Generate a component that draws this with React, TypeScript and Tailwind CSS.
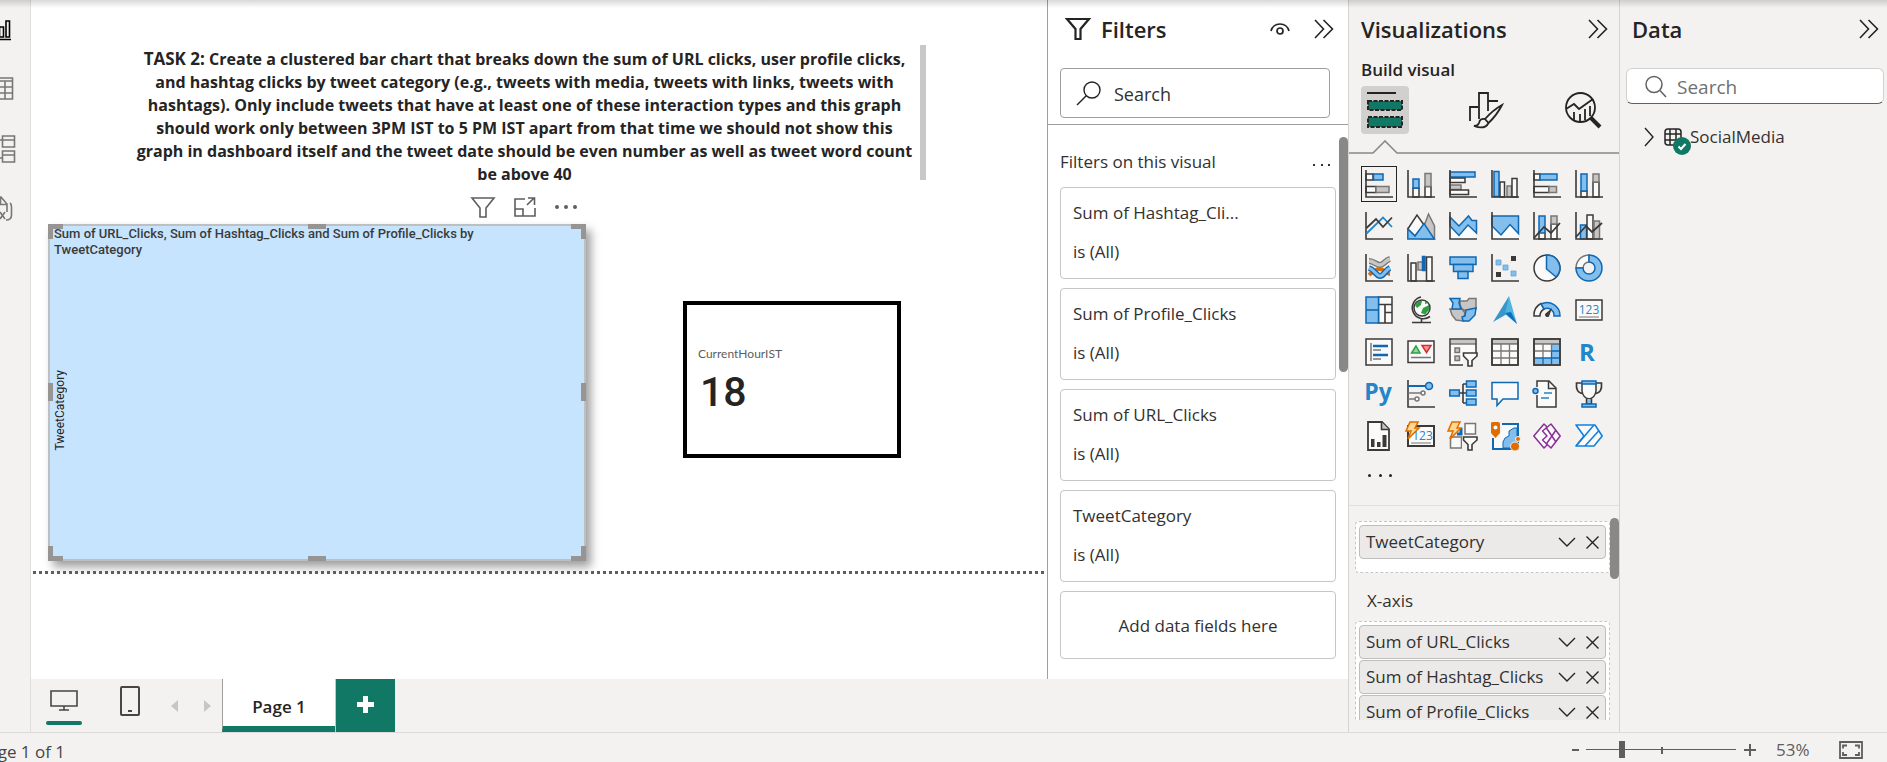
import React from "react";

const K = "#3b3a39";
const B = "#0f68b4";
const LB = "#83beec";
const G = "#797775";
const LG = "#c8c6c4";
const W = "#fafafa";

type BoxProps = { x: number; y: number; w: number; h: number; f?: string; s?: string; sw?: number };
const Box = ({ x, y, w, h, f = W, s = K, sw = 1.5 }: BoxProps) => (
  <rect x={x} y={y} width={w} height={h} fill={f} stroke={s} strokeWidth={sw} />
);
const Axis = () => <path d="M1 0V27H28" fill="none" stroke={K} strokeWidth={1.6} />;
const Line = ({ d, s = K, sw = 1.5, f = "none" }: { d: string; s?: string; sw?: number; f?: string }) => (
  <path d={d} fill={f} stroke={s} strokeWidth={sw} />
);
const Bolt = () => <path d="M3 0H11L8 6H12L1 17L4 9H-1Z" fill="#fcd98c" stroke="#e06c00" strokeWidth={1.5} />;
const SmallFunnel = () => <path d="M14.500 15H28V18L23 22.500V28H19V22.500L14.500 18Z" fill={W} stroke={K} strokeWidth={1.6} />;

const visuals: [string, React.ReactNode][] = [
  ["Stacked bar chart", <><Box x={1} y={4} w={7} h={6} /><Box x={8.5} y={4} w={9.500} h={6} f={LB} s={B} /><Box x={1} y={16.500} w={10} h={6} /><Box x={11} y={16.500} w={13} h={6} f={LG} s={G} /><Axis /></>],
  ["Stacked column chart", <><Box x={6} y={18} w={6} h={9} /><Box x={6} y={9} w={6} h={9} f={LB} s={B} /><Box x={18} y={16.500} w={6} h={10.500} /><Box x={18} y={3.500} w={6} h={13} f={LG} s={G} /><Axis /></>],
  ["Clustered bar chart", <><Box x={1} y={2} w={25} h={5} f={LB} s={B} /><Box x={1} y={8} w={15} h={4.500} /><Box x={1} y={15} w={11} h={4.500} f={LG} s={G} /><Box x={1} y={20} w={18.500} h={4.500} /><Axis /></>],
  ["Clustered column chart", <><Box x={3} y={1.500} w={5} h={25} f={LB} s={B} /><Box x={9} y={12} w={4.500} h={15} /><Box x={16} y={16} w={4.500} h={11} f={LG} s={G} /><Box x={21} y={8.500} w={5} h={18.500} /><Axis /></>],
  ["100% stacked bar chart", <><Box x={1} y={4} w={6} h={6} /><Box x={7} y={4} w={17} h={6} f={LB} s={B} /><Box x={1} y={16.500} w={15} h={6} /><Box x={16} y={16.500} w={7.500} h={6} f={LG} s={G} /><Axis /></>],
  ["100% stacked column chart", <><Box x={6} y={21} w={6} h={6} /><Box x={6} y={4} w={6} h={17} f={LB} s={B} /><Box x={18} y={12} w={6} h={15} /><Box x={18} y={4} w={6} h={8} f={LG} s={G} /><Axis /></>],

  ["Line chart", <><Axis /><Line d="M1.500 21.500L18 5.500L27 15" s="#2386c8" sw={1.8} /><Line d="M1.500 16L11 7L18 15L27 5.500" sw={1.8} /></>],
  ["Area chart", <><Line d="M14 22L21.500 2L27.500 14V27H14Z" f={LG} s={G} /><Line d="M.8 17L10 3L17 13L8 24Z" f={W} /><Line d="M.8 17L8 24L17 11.500L27.300 27H.8Z" f={LB} s={B} /></>],
  ["Stacked area chart", <><path d="M1 14L10 24L19 13L27 21V27H1Z" fill={W} /><Line d="M1 5L10 14L19.500 4L23 8.500H27.500V21L19 13L10 23.500L1 14Z" f={LB} s={B} /><Axis /></>],
  ["100% stacked area chart", <><path d="M1 14L10 24L19 13L27 21V27H1Z" fill={W} /><Line d="M1 4H27.500V21.500L19 12.500L10 23L1 14Z" f={LB} s={B} /><Axis /></>],
  ["Line and stacked column chart", <><Box x={6} y={20} w={6} h={7} /><Box x={6} y={4} w={6} h={17} f={LB} s={B} /><Box x={18} y={12} w={6} h={15} /><Box x={18} y={4} w={6} h={8} f={LG} s={G} /><Axis /><Line d="M1 26L11 15L18 21L27 11" sw={1.8} /></>],
  ["Line and clustered column chart", <><Box x={5.500} y={13} w={6} h={14} f={LB} s={B} /><Box x={12} y={3} w={6} h={24} /><Box x={19} y={9} w={5.500} h={18} f={LG} s={G} /><Axis /><Line d="M1 25L11 14L17 20L27 11" sw={1.8} /></>],

  ["Ribbon chart", <><path d="M4 21C9 17 11 15 15 15S21 20 25 20" fill="none" stroke="#e06c00" strokeWidth={4} /><path d="M4 14C10 16 11 22 15 22S20 16 25 14" fill="none" stroke={B} strokeWidth={6} /><path d="M4 14C10 16 11 22 15 22S20 16 25 14" fill="none" stroke={LB} strokeWidth={3} /><path d="M4 7C9 7 11 11 15 11S20 6 25 5" fill="none" stroke={G} strokeWidth={6} /><path d="M4 7C9 7 11 11 15 11S20 6 25 5" fill="none" stroke={LG} strokeWidth={3.500} /><Axis /></>],
  ["Waterfall chart", <><Box x={4} y={9} w={5} h={18} /><Box x={11} y={8} w={5} h={8} f={LG} s={G} /><Box x={15.500} y={2.500} w={2.500} h={14} f={B} s={B} /><Box x={19.500} y={3} w={5.500} h={24} /><Axis /></>],
  ["Funnel", <><Box x={1} y={3} w={26} h={7.500} f={LB} s={B} /><Box x={4.500} y={10.500} w={19.500} h={7} f={LB} s={B} /><Box x={9} y={17.500} w={10} h={7} f={LB} s={B} /></>],
  ["Scatter chart", <><Axis /><path d="M20 2h5v5h-5zM5 18h5v5H5z" fill={K} /><path d="M5 6h5v5H5zM12 11h5v5h-5zM20 17h5v5h-5z" fill={LB} stroke="#5fa5dd" strokeWidth={0.8} /></>],
  ["Pie chart", <><circle cx={14} cy={14} r={13} fill={W} stroke={K} strokeWidth={1.5} /><Line d="M13.500 1A13 13 0 0 1 23.200 23L13.500 15Z" f={LB} s={B} /></>],
  ["Donut chart", <><Line d="M14 1A13 13 0 0 0 1 14H8A6 6 0 0 1 14 8Z" f={W} s={G} /><Line d="M14 1A13 13 0 1 1 1 14H8A6 6 0 1 0 14 8Z" f={LB} s={B} /></>],

  ["Treemap", <><Box x={13.500} y={1} w={13.500} h={26} /><path d="M13.500 8.500H27M20 8.500V27M20 16.500H27" stroke={K} strokeWidth={1.6} /><Box x={1} y={1} w={12.500} h={26} f={LB} s={B} /><path d="M1 14H13.500" stroke={B} strokeWidth={1.600} /></>],
  ["Map", <><circle cx={15} cy={12} r={8} fill={W} stroke={K} strokeWidth={1.500} /><path d="M8 9Q11 4 15 5L14 9L10 12ZM16 12L22 9L22 14L18 18.500L14 17ZM18 5L21 7L18 8Z" fill="#2f9e44" /><path d="M14 1A11 11 0 1 0 23 20.500M14.500 23V26.500M5 26.500H24" fill="none" stroke={K} strokeWidth={1.600} /></>],
  ["Filled map", <><Line d="M11 5L18 5L20 2.500H27V13L17 15L13 13L11 9Z" f={LG} s={G} /><Line d="M1 13H13L16 17L14 25L7 24L3 19Z" f={LG} s={G} /><Line d="M1 2.500H11L10 7L12 13H3L4 7Z" f={LB} s={B} /><Line d="M17 14L27 12L26 19L20 25H14L13 21L16 20Z" f={LB} s={B} /></>],
  ["Azure map", <><path d="M18 0L2 26L16 18Z" fill="#3a95c8" /><path d="M18 0L26 28L14 18Z" fill="#50b4de" /><path d="M14 17L20 16L26 28Z" fill="#0a6fc2" /></>],
  ["Gauge", <><Line d="M1 20A13 13 0 0 1 8 7.500L11 13A8 8 0 0 0 7 20Z" f={W} /><Line d="M8 8A13 13 0 0 1 27 20H21A7 7 0 0 0 11 13Z" f={LB} s={B} /><path d="M12 18L19 12L16 20.500A2.500 2.500 0 0 1 12 18Z" fill={K} /></>],
  ["Card", <><Box x={1} y={4} w={26} h={20} /><text x={14} y={18} textAnchor="middle" fontSize={12} fill="#2386c8">123</text><path d="M4 21H24" stroke={G} /></>],

  ["Multi-row card", <><Box x={1} y={1} w={26} h={26} /><path d="M6 5V23" stroke={G} strokeWidth={1.500} /><path d="M8 8H23M8 17H23" stroke={B} strokeWidth={2.500} /><path d="M8 12H16M8 21H16" stroke={G} strokeWidth={1.500} /></>],
  ["KPI", <><Box x={1} y={3} w={26} h={21.500} /><Line d="M9 8L4.500 15H13Z" f="#92d3a0" s="#2f9e44" /><Line d="M15 7.500H24L19.500 14.500Z" f="#f59a9e" s="#d92c2c" /><path d="M4 19.500H24" stroke={G} strokeWidth={1.500} /></>],
  ["Slicer", <><Box x={1} y={1} w={26} h={26} /><rect x={2} y={2} width={24} height={3.500} fill={LG} /><path d="M1 6H27" stroke={K} /><Box x={6} y={10} w={4.500} h={4.500} f={LG} s={G} /><Box x={6} y={18} w={4.500} h={4.500} f={LG} s={G} /><rect x={14} y={19} width={15} height={9} fill="#f3f2f1" /><SmallFunnel /></>],
  ["Table", <><Box x={1} y={1} w={26} h={26} /><rect x={2} y={2} width={24} height={4} fill={LG} /><path d="M1 6H27" stroke={K} /><path d="M10 6V26M18.500 6V26M2 13H26M2 20H26" stroke={G} strokeWidth={1.300} /><Box x={1} y={1} w={26} h={26} f="none" /></>],
  ["Matrix", <><Box x={1} y={1} w={26} h={26} /><rect x={2} y={2} width={24} height={4} fill={LG} /><path d="M18.500 6H26V26H2V20H18.500Z" fill={LB} /><path d="M1 6H27" stroke={K} /><path d="M10 6V20M18.500 6V13M2 13H18.500" stroke={G} strokeWidth={1.300} /><path d="M10 20V26M18.500 13V26M18.500 13H26M2 20H26" stroke={B} strokeWidth={1.300} /><Box x={1} y={1} w={26} h={26} f="none" /></>],
  ["R script visual", <text x={12} y={23} textAnchor="middle" fontSize={24} fontWeight={700} fill="#2386c8">R</text>],

  ["Python visual", <text x={13} y={20} textAnchor="middle" fontSize={23} fontWeight={700} fill="#2386c8">Py</text>],
  ["Key influencers", <><Axis /><path d="M1 6H19" stroke={B} strokeWidth={2} /><circle cx={22} cy={6} r={3.500} fill={LB} stroke={B} strokeWidth={1.600} /><path d="M1 13H14M1 19H8" stroke={G} strokeWidth={1.600} /><circle cx={16} cy={13} r={2} fill={W} stroke={G} strokeWidth={1.500} /><circle cx={10} cy={19} r={2} fill={W} stroke={G} strokeWidth={1.500} /></>],
  ["Decomposition tree", <><path d="M10 13H17M14 4V23M14 4H17M14 23H17" fill="none" stroke={K} strokeWidth={1.600} /><Box x={.8} y={10} w={9.500} h={6} f={LB} s={B} /><Box x={17.500} y={1} w={9.500} h={6} f={LB} s={B} /><Box x={17.500} y={10} w={9.500} h={6} f={LB} s={B} /><Box x={17.500} y={19} w={9.500} h={6} f={LB} s={B} /></>],
  ["Q&A", <Line d="M1 2.500H27V19H12L6 25.500V19H1Z" f={W} s={B} />],
  ["Smart narrative", <><Line d="M4 7V1H16L23 8V27H4V15" f={W} /><Line d="M15.500 1V8.500H23" /><circle cx={2.500} cy={11} r={2.500} fill={LB} stroke={B} strokeWidth={1.500} /><path d="M11 13H19M8 18H16" stroke="#2386c8" strokeWidth={1.500} /></>],
  ["Metrics", <><Line d="M7 3H1.500Q.5 13 8 13.500M21 3H26.500Q27.500 13 20 13.500" sw={1.700} /><Line d="M7 3V11Q8 18 14 19Q20 18 21 11V3Z" f={W} /><path d="M11.500 19V24H16.500V19" fill={LB} stroke={K} strokeWidth={1.500} /><Box x={7} y={1} w={14} h={3} f={LB} s={B} /><Box x={7} y={24} w={14} h={3} f={LB} s={B} /></>],

  ["Paginated report", <><Line d="M3 0H17L24 7V28H3Z" f={W} sw={1.800} /><path d="M16.500 0V7.500H24" fill={LG} stroke={K} strokeWidth={1.600} /><path d="M6 17H9.500V25H6ZM12 20H15.500V25H12ZM17.500 13H21.500V25H17.500Z" fill={K} /></>],
  ["New card", <><Box x={1} y={4} w={26} h={20} sw={2} /><text x={15.500} y={18} textAnchor="middle" fontSize={12} fill="#2386c8">123</text><path d="M4 21H24" stroke={G} /><Bolt /></>],
  ["New slicer", <><Box x={1.500} y={15} w={11} h={11} s={G} /><Box x={16} y={1.500} w={10.500} h={10.500} s={G} /><path d="M8 12H12V6" fill="none" stroke={B} strokeWidth={3} /><rect x={13} y={14} width={15} height={14} fill="#f3f2f1" /><SmallFunnel /><Bolt /></>],
  ["ArcGIS map", <><Box x={2} y={2} w={25} h={25} f={W} s={B} sw={2} /><path d="M12 26V20L14 16L18 14V9L23 6H26V26Z" fill={LB} stroke={B} /><path d="M0 0H11V9L6 16H0Z" fill="#f3f2f1" /><path d="M0 1Q0 0 2 0H7Q9 0 9 2V11L4.500 16L0 11Z" fill="#e06c00" /><circle cx={4.500} cy={5.500} r={2} fill={W} /><circle cx={24} cy={24.500} r={4.500} fill="#e06c00" stroke="#f3f2f1" /><circle cx={27} cy={17} r={2.500} fill="#e06c00" stroke="#f3f2f1" /></>],
  ["Power Apps", <g fill={W} stroke="#8b2f97" strokeWidth={1.500} strokeLinejoin="round"><path d="M14 5L11 2L.8 14L11 26L14 23" /><path d="M18 2L27.200 14L18 26L9.500 18L14 14L9.500 9Z" /><path d="M13 5.500L23 20M23 8L13 22.500" fill="none" /></g>],
  ["Power Automate", <g fill={W} stroke="#1081e0" strokeWidth={1.600} strokeLinejoin="round"><path d="M1 3H20L27.200 14L19 24H1L9 14Z" /><path d="M1 24L19 3M10 24L24 8.500" fill="none" /></g>],
];

const Icon = ({ w, h, children, className = "", c = "#252423", sw = 1.6 }: { w: number; h: number; children: React.ReactNode; className?: string; c?: string; sw?: number }) => (
  <svg width={w} height={h} viewBox={`0 0 ${w} ${h}`} fill="none" stroke={c} strokeWidth={sw} className={`shrink-0 overflow-visible ${className}`} aria-hidden="true">
    {children}
  </svg>
);

const Collapse = ({ label }: { label: string }) => (
  <button aria-label={label} className="shrink-0">
    <Icon w={20} h={20}><path d="M1 1L9.500 10L1 19M9.500 1L18.500 10L9.500 19" /></Icon>
  </button>
);

const Handle = ({ className }: { className: string }) => <span className={`absolute border-[#979593] ${className}`} />;

const filters = ["Sum of Hashtag_Cli...", "Sum of Profile_Clicks", "Sum of URL_Clicks", "TweetCategory"];
const taskLines = [
  "and hashtag clicks by tweet category (e.g., tweets with media, tweets with links, tweets with",
  "hashtags). Only include tweets that have at least one of these interaction types and this graph",
  "should work only between 3PM IST to 5 PM IST apart from that time we should not show this",
  "graph in dashboard itself and the tweet date should be even number as well as tweet word count",
  "be above 40",
];

const Field = ({ name }: { name: string }) => (
  <div className="flex h-[34px] shrink-0 items-center rounded-sm border border-[#c0bebc] bg-[#ebeae9] pr-1.5 pl-1.5 text-[17px] text-[#323130]">
    <span className="flex-1 whitespace-nowrap">{name}</span>
    <button aria-label={`${name} options`} className="mr-2.5">
      <Icon w={18} h={12} sw={1.4}><path d="M1 2L9 10L17 2" /></Icon>
    </button>
    <button aria-label={`Remove ${name}`}>
      <Icon w={13} h={13} sw={1.4}><path d="M.5 .5L12.500 12.500M12.500 .5L.5 12.500" /></Icon>
    </button>
  </div>
);

function NavRail() {
  const g = "#797775";
  return (
    <nav className="flex w-[31px] shrink-0 flex-col overflow-hidden border-r border-[#e1dfdd] pr-3.5">
      <button aria-label="Report view" className="flex h-[60px] items-center justify-end">
        <Icon w={30} h={24} c="#000"><path d="M5 10H9V19H5ZM13.500 9H17.500V19H13.500ZM20 3H23.500V19H20ZM4 21.500H25" /></Icon>
      </button>
      <button aria-label="Table view" className="flex h-[60px] items-center justify-end">
        <Icon w={30} h={24} c={g}><path d="M4 0H26.500V21H4ZM4 3H26.500M4 9H26.500M4 15H26.500M12 3V21M19 3V21" /></Icon>
      </button>
      <button aria-label="Model view" className="flex h-[60px] items-center justify-end">
        <Icon w={30} h={28} c={g}><path d="M16.500 0H28.500V11H16.500ZM16.500 4H28.500M16.500 15H28.500V26H16.500ZM16.500 19H28.500M11 4H16.500M11 22H16.500" /></Icon>
      </button>
      <button aria-label="DAX query view" className="flex h-[60px] items-center justify-end">
        <Icon w={30} h={28} c={g}><path d="M4 1H15L21 8V16M14.500 1V8.500H21M24 7Q25.500 8 25.500 11V19Q25.500 24 20 24M14 16L19 23M19 16L14 23" /></Icon>
      </button>
    </nav>
  );
}

function Canvas() {
  return (
    <main className="relative min-w-0 flex-1 overflow-hidden bg-white">
      <div className="absolute top-[45px] left-[98px] flex h-[135px] w-[797px]">
        <p className="flex-1 pt-0.5 text-center text-[16px] leading-[23px] font-bold whitespace-nowrap text-[#252423]">
          <span className="block"><span className="text-[17px]">TASK 2:</span> Create a clustered bar chart that breaks down the sum of URL clicks, user profile clicks,</span>
          {taskLines.map((l) => <span key={l} className="block">{l}</span>)}
        </p>
        <div className="w-1.5 bg-[#c8c8c8]" />
      </div>

      <div className="absolute top-[195px] left-[440px] flex items-center gap-[19px]">
        <button aria-label="Filters on visual"><Icon w={24} h={24} c="#605e5c"><path d="M1 3H23L15 13V22H9V13Z" /></Icon></button>
        <button aria-label="Focus mode"><Icon w={22} h={22} c="#605e5c"><path d="M11 3H1V20H21V12M1 13H9V20M13 9L20 2M14 2H20.500V9" /></Icon></button>
        <button aria-label="More options"><Icon w={22} h={6} c="none"><path d="M0 3a2 2 0 1 0 4 0a2 2 0 1 0-4 0M9 3a2 2 0 1 0 4 0a2 2 0 1 0-4 0M18 3a2 2 0 1 0 4 0a2 2 0 1 0-4 0" fill="#605e5c" /></Icon></button>
      </div>

      <section className="absolute top-[224px] left-[17px] h-[337px] w-[538px] border-2 border-[#bdbfc1] bg-[#c7e4ff] font-[Roboto,sans-serif] shadow-[5px_6px_9px_rgba(0,0,0,0.38)]">
        <Handle className="-top-0.5 -left-0.5 size-[15px] border-t-[5px] border-l-[5px]" />
        <Handle className="-top-0.5 -right-0.5 size-[15px] border-t-[5px] border-r-[5px]" />
        <Handle className="-bottom-0.5 -left-0.5 size-[15px] border-b-[5px] border-l-[5px]" />
        <Handle className="-right-0.5 -bottom-0.5 size-[15px] border-r-[5px] border-b-[5px]" />
        <Handle className="-top-0.5 left-[258px] w-[18px] border-t-[5px]" />
        <Handle className="-bottom-0.5 left-[258px] w-[18px] border-b-[5px]" />
        <Handle className="top-[157px] -left-0.5 h-[18px] border-l-[5px]" />
        <Handle className="top-[157px] -right-0.5 h-[18px] border-r-[5px]" />
        <h3 className="relative pl-1 text-[13px] leading-4 font-medium text-[#3b3a39]">Sum of URL_Clicks, Sum of Hashtag_Clicks and Sum of Profile_Clicks by<br />TweetCategory</h3>
        <span className="absolute top-36 left-0.5 rotate-180 text-[12px] leading-4 text-[#252423] [writing-mode:vertical-rl]">TweetCategory</span>
      </section>

      <section className="absolute top-[301px] left-[652px] flex h-[157px] w-[218px] flex-col justify-center border-4 border-black pt-2 pl-[11px]">
        <h3 className="font-[Lato,sans-serif] text-[12px] leading-4 text-[#605e5c]">CurrentHourIST</h3>
        <p className="pl-0.5 font-[Roboto,sans-serif] text-[41px] leading-[60px] font-medium text-[#252423]">18</p>
      </section>

      <div className="absolute top-[571px] right-0 left-0.5 h-[3px] bg-[repeating-linear-gradient(90deg,#605e5c_0_3px,transparent_3px_6px)]" />
    </main>
  );
}

function FiltersPane() {
  return (
    <aside className="relative w-[301px] shrink-0 border-l border-[#a19f9d] bg-white text-[17px] text-[#323130]">
      <header className="flex h-[58px] items-center pr-3.5 pl-[17px] text-[#252423]">
        <Icon w={26} h={24} sw={2.2}><path d="M2 2H24L15.500 12V22H10.500V12Z" /></Icon>
        <h2 className="ml-2.5 flex-1 text-[22px] font-semibold">Filters</h2>
        <button aria-label="Show filter pane to report readers" className="mr-6">
          <Icon w={20} h={14} sw={1.7}><path d="M1 9Q3 2 10 2T19 9" /><circle cx={10} cy={9} r={3} /></Icon>
        </button>
        <Collapse label="Collapse filters" />
      </header>
      <div className="border-b border-[#a19f9d] pt-2.5 pr-[18px] pb-1.5 pl-3">
        <label className="flex h-[50px] items-center gap-[13px] rounded-sm border border-[#a19f9d] pt-0.5 pl-4">
          <Icon w={24} h={24} sw={1.4}><circle cx={15} cy={8} r={8} /><path d="M9.500 13.500L0 23" /></Icon>
          <input aria-label="Search filters" placeholder="Search" className="w-full min-w-0 bg-transparent text-[18px] outline-none placeholder:text-[#323130]" />
        </label>
      </div>
      <div className="flex items-center justify-between pt-6 pr-[18px] pb-3 pl-3 leading-[26px]">
        <h3>Filters on this visual</h3>
        <button aria-label="More filter options" className="flex w-[17px] justify-between pt-1.5">
          <i className="size-0.5 bg-[#323130]" /><i className="size-0.5 bg-[#323130]" /><i className="size-0.5 bg-[#323130]" />
        </button>
      </div>
      <ul className="flex flex-col gap-[9px] pr-3 pl-3">
        {filters.map((f) => (
          <li key={f} className="flex h-[92px] flex-col gap-[15px] rounded-sm border border-[#c8c6c4] pt-[13px] pl-3 leading-6">
            <span>{f}</span>
            <span>is (All)</span>
          </li>
        ))}
        <li className="flex h-[68px] items-center justify-center rounded-sm border border-[#c8c6c4] pt-px">Add data fields here</li>
      </ul>
      <div className="absolute top-[137px] right-0 h-[235px] w-[9px] rounded-full bg-[#8a8886]" />
    </aside>
  );
}

function Visualizations() {
  return (
    <aside className="flex w-[272px] shrink-0 flex-col border-x border-[#d6d4d2] text-[#252423]">
      <header className="flex h-[58px] items-center justify-between pr-[11px] pl-3">
        <h2 className="text-[22px] font-semibold">Visualizations</h2>
        <Collapse label="Collapse visualizations" />
      </header>
      <h3 className="pl-3 text-[17px] leading-6 font-semibold">Build visual</h3>
      <div className="flex items-center justify-between pt-1 pr-[18px] pl-3">
        <button aria-label="Build visual" className="flex size-12 items-center justify-center rounded-sm bg-[#d2d0ce]">
          <Icon w={36} h={36} sw={2}>
            <path d="M0 1H29" />
            <path d="M1 9H35V18H1ZM1 25H35V35H1Z" fill="#117865" strokeDasharray="4 1.500" />
          </Icon>
        </button>
        <button aria-label="Format visual">
          <Icon w={34} h={36} sw={1.800}>
            <path d="M0 29V15H8M9 27V1H18V19M18 9H28" />
            <path d="M32 13Q23 18 15 27L18.500 31Q27 23 32 13ZM15 27Q10 26 9 31Q8 34 4 34Q15 38 18.500 31" />
          </Icon>
        </button>
        <button aria-label="Analytics">
          <Icon w={36} h={36} sw={1.800}>
            <circle cx={15.500} cy={15.500} r={14.500} />
            <path d="M1 17L9 12L14 17L28 7M9 28V20M15 29V22M20 28V17M25 24V14" />
            <path d="M26 26L35 35" strokeWidth={4} />
          </Icon>
        </button>
      </div>
      <svg width="100%" height="14" className="mt-1.5 shrink-0" fill="none" stroke="#8a8886" strokeWidth="1.6" aria-hidden="true">
        <path d="M0 13H24L36 1L48 13H600" />
      </svg>
      <div className="grid grid-cols-[repeat(6,36px)] gap-1.5 pt-3 pl-3">
        {visuals.map(([name, art], i) => (
          <button key={name} aria-label={name} className={i === 0 ? "flex size-9 items-center justify-center border border-[#252423]" : "flex size-9 items-center justify-center"}>
            <svg width="28" height="28" viewBox="0 0 28 28" className="overflow-visible" aria-hidden="true">{art}</svg>
          </button>
        ))}
      </div>
      <button aria-label="More visuals" className="mt-4 ml-[19px] flex w-6 items-center justify-between py-1">
        <i className="size-[3px] rounded-full bg-[#252423]" /><i className="size-[3px] rounded-full bg-[#252423]" /><i className="size-[3px] rounded-full bg-[#252423]" />
      </button>
      <div className="mt-6 flex min-h-0 flex-1 flex-col border-t border-[#e1dfdd] pb-3">
        <div className="relative min-h-0 flex-1 overflow-hidden pt-[15px] pr-[9px] pl-1.5">
          <div className="h-[52px] rounded-sm border border-dashed border-[#c8c6c4] bg-white p-[3px]">
            <Field name="TweetCategory" />
          </div>
          <h4 className="pt-[15px] pb-[7px] pl-3 text-[17px] leading-[26px] text-[#323130]">X-axis</h4>
          <div className="flex flex-col gap-px rounded-sm border border-dashed border-[#c8c6c4] bg-white p-[3px]">
            <Field name="Sum of URL_Clicks" />
            <Field name="Sum of Hashtag_Clicks" />
            <Field name="Sum of Profile_Clicks" />
          </div>
          <div className="absolute top-3 right-0 h-[61px] w-[9px] rounded-full bg-[#8a8886]" />
        </div>
      </div>
    </aside>
  );
}

function DataPane() {
  return (
    <aside className="w-[267px] shrink-0 text-[#252423]">
      <header className="flex h-[58px] items-center justify-between pr-2 pl-3">
        <h2 className="text-[22px] font-semibold">Data</h2>
        <Collapse label="Collapse data" />
      </header>
      <div className="pt-2.5 pr-[3px] pl-1.5">
        <label className="flex h-9 items-center gap-2.5 rounded-md border border-[#d1d1d1] border-b-[#616161] bg-white pt-0.5 pl-[18px]">
          <Icon w={22} h={22} c="#616161" sw={1.5}><circle cx={9} cy={8.500} r={8} /><path d="M15 14.500L21 21" /></Icon>
          <input aria-label="Search data" placeholder="Search" className="w-full min-w-0 bg-transparent text-[19px] outline-none placeholder:text-[#707070]" />
        </label>
      </div>
      <button className="mt-5 ml-6 flex items-center text-[17px] leading-[26px] text-[#323130]">
        <Icon w={10} h={18} sw={1.4}><path d="M1 0L9 9L1 18" /></Icon>
        <span className="relative ml-2.5 block">
          <Icon w={18} h={18} sw={1.5}><rect x={1} y={1} width={16} height={16} rx={3} /><path d="M6 1V17M12 1V17M1 6H17M1 12H17" /></Icon>
          <span className="absolute top-[9px] left-[9px]"><Icon w={18} h={18} c="none"><circle cx={9} cy={9} r={9} fill="#117865" /><path d="M5.500 9.500L8 12L12.500 7" stroke="#fff" strokeWidth={2} /></Icon></span>
        </span>
        <span className="ml-2">SocialMedia</span>
      </button>
    </aside>
  );
}

function PageTabs() {
  return (
    <div className="flex h-[53px] shrink-0">
      <div className="flex flex-1 items-stretch">
        <button aria-label="Desktop layout" className="ml-[15px] flex w-9 flex-col items-center justify-end pb-[7px]">
          <Icon w={28} h={21} c="#484644" className="mb-2.5"><path d="M1 1H27V16H1ZM14 16V20M9 20H19" /></Icon>
          <span className="h-1 w-full rounded-full bg-[#117865]" />
        </button>
        <button aria-label="Mobile layout" className="ml-[38px] pb-2.5">
          <Icon w={20} h={30} c="#484644" sw={2}><rect x={1} y={1} width={18} height={28} rx={1} /><path d="M8 25H12" /></Icon>
        </button>
        <button aria-label="Previous page" className="ml-[31px]"><Icon w={7} h={12} c="none"><path d="M7 0V12L0 6Z" fill="#c8c6c4" /></Icon></button>
        <button aria-label="Next page" className="mr-[11px] ml-[26px]"><Icon w={7} h={12} c="none"><path d="M0 0V12L7 6Z" fill="#c8c6c4" /></Icon></button>
        <button className="w-[113px] border-b-[6px] border-l border-b-[#117865] border-l-[#a19f9d] bg-white pt-2 text-[17px] font-semibold text-[#252423]">Page 1</button>
        <button aria-label="New page" className="flex w-[60px] items-center justify-center border-l border-[#c8c6c4] bg-[#117865] pb-0.5">
          <Icon w={17} h={17} c="#fff" sw={5}><path d="M8.500 0V17M0 8.500H17" /></Icon>
        </button>
      </div>
    </div>
  );
}

function StatusBar() {
  return (
    <footer className="flex h-[30px] shrink-0 items-center border-t border-[#dcdad8] text-[17px] text-[#484644]">
      <span className="-ml-[22px] pt-2 whitespace-nowrap">Page 1 of 1</span>
      <div className="ml-auto flex items-center pt-1 pr-6 text-[#605e5c]">
        <button aria-label="Zoom out" className="mr-[7px]"><Icon w={7} h={12} c="#605e5c" sw={2}><path d="M0 6H7" /></Icon></button>
        <span className="relative flex items-center">
          <input type="range" aria-label="Zoom" defaultValue={23} className="h-[18px] w-[150px] appearance-none bg-[linear-gradient(#605e5c,#605e5c)] bg-[length:100%_1px] bg-center bg-no-repeat [&::-webkit-slider-thumb]:h-[17px] [&::-webkit-slider-thumb]:w-1.5 [&::-webkit-slider-thumb]:appearance-none [&::-webkit-slider-thumb]:bg-[#605e5c]" />
          <span className="absolute top-1.5 left-1/2 h-[7px] w-0.5 bg-[#605e5c]" />
        </span>
        <button aria-label="Zoom in" className="ml-2"><Icon w={12} h={12} c="#605e5c" sw={2}><path d="M6 0V12M0 6H12" /></Icon></button>
        <span className="mr-[27px] ml-5 w-9">53%</span>
        <button aria-label="Fit to page"><Icon w={24} h={18} c="#605e5c" sw={1.8}><path d="M1 1H23V17H1Z" /><path d="M4 7.500V4.500H8M16 4.500H20V7.500M4 11V14H8M16 14H20V11" /></Icon></button>
      </div>
    </footer>
  );
}

export default function App() {
  return (
    <div className="relative flex h-screen min-h-[762px] flex-col overflow-hidden bg-[#f3f2f1] font-['Open_Sans','Noto_Sans',sans-serif]">
      <div className="flex min-h-0 flex-1">
        <NavRail />
        <div className="flex min-w-0 flex-1 flex-col">
          <div className="flex min-h-0 flex-1">
            <Canvas />
            <FiltersPane />
          </div>
          <PageTabs />
        </div>
        <Visualizations />
        <DataPane />
      </div>
      <StatusBar />
      <div className="pointer-events-none absolute inset-x-0 top-0 h-2 bg-linear-to-b from-black/15 to-transparent" />
    </div>
  );
}
